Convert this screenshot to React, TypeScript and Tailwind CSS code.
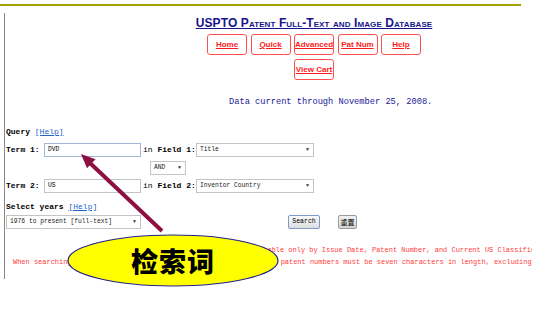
import React from "react";

const navBtns = ["Home", "Quick", "Advanced", "Pat Num", "Help"];

function NavButton({ label }: { label: string }) {
  return (
    <div className="w-[40px] h-[21px] border border-[#ff5050] rounded-[3px] flex items-center justify-center">
      <span className="text-[8px] font-bold text-[#ff1a1a] underline font-['Liberation_Sans',sans-serif] whitespace-nowrap">
        {label}
      </span>
    </div>
  );
}

function FakeSelect({ value, w }: { value: string; w: string }) {
  return (
    <div
      className={`${w} h-[14px] border border-[#c4c4c4] bg-white flex items-center justify-between pl-[3px] pr-[4px]`}
    >
      <span className="text-[6.3px] leading-none text-[#222] whitespace-nowrap">{value}</span>
      <span className="text-[5px] leading-none text-[#333]">▼</span>
    </div>
  );
}

export default function App() {
  return (
    <div className="relative w-[551px] h-[319px] bg-white overflow-hidden font-['Liberation_Mono',monospace]">
      {/* top rule */}
      <div className="mt-[4px] h-[2px] w-[521px] bg-[#a0a000]" />

      <div className="mt-[7px] ml-[4px] w-[528px] h-[266px] border-l border-[#8a8a8a] overflow-hidden">
        {/* header */}
        <div className="ml-[189px] w-[240px] flex flex-col items-center">
          <div className="mt-[3px] leading-[14px] text-[12px] font-bold text-[#14148c] underline [font-variant:small-caps] font-['Liberation_Sans',sans-serif] whitespace-nowrap tracking-[0.1px]">
            USPTO Patent Full-Text and Image Database
          </div>
          <div className="mt-[4px] flex gap-[3.5px]">
            {navBtns.map((b) => (
              <NavButton key={b} label={b} />
            ))}
          </div>
          <div className="mt-[4px]">
            <NavButton label="View Cart" />
          </div>
        </div>

        <div className="mt-[17px] ml-[224px] text-[8.7px] leading-[10px] text-[#1a1a99] whitespace-nowrap">
          Data current through November 25, 2008.
        </div>

        {/* form */}
        <div className="ml-[1px] mt-[20px] text-[8px] text-black">
          <div className="leading-[10px] font-bold">
            Query <span className="text-[#2266cc] underline font-normal">[Help]</span>
          </div>

          <div className="mt-[6px] flex items-center h-[14px]">
            <span className="font-bold w-[38px] whitespace-nowrap">Term 1:</span>
            <div className="w-[97px] h-[14px] border border-[#9fb8d8] pl-[3px] flex items-center">
              <span className="text-[6.3px] leading-none">DVD</span>
            </div>
            <span className="ml-[2px] w-[53px] whitespace-nowrap">
              in <b>Field 1:</b>
            </span>
            <FakeSelect value="Title" w="w-[118px]" />
          </div>

          <div className="mt-[4px] ml-[144px]">
            <FakeSelect value="AND" w="w-[36px]" />
          </div>

          <div className="mt-[4px] flex items-center h-[14px]">
            <span className="font-bold w-[38px] whitespace-nowrap">Term 2:</span>
            <div className="w-[97px] h-[14px] border border-[#c4c4c4] pl-[3px] flex items-center">
              <span className="text-[6.3px] leading-none">US</span>
            </div>
            <span className="ml-[2px] w-[53px] whitespace-nowrap">
              in <b>Field 2:</b>
            </span>
            <FakeSelect value="Inventor Country" w="w-[118px]" />
          </div>

          <div className="mt-[9px] leading-[10px] font-bold">
            Select years <span className="text-[#2266cc] underline font-normal">[Help]</span>
          </div>

          <div className="mt-[3px] flex items-center">
            <FakeSelect value="1976 to present [full-text]" w="w-[135px]" />
            <button className="ml-[147px] w-[32px] h-[14px] border border-[#7b9cc9] rounded-[2px] bg-gradient-to-b from-[#fafafa] to-[#dedede] text-[6.5px] leading-none text-black">
              Search
            </button>
            <button className="ml-[18px] w-[19px] h-[14px] border border-[#9a9a9a] rounded-[2px] bg-gradient-to-b from-[#f2f2f2] to-[#d4d4d4] text-[7px] leading-none text-black font-['Noto_Sans_CJK_SC',sans-serif]">
              重置
            </button>
          </div>
        </div>

        {/* notes */}
        <div className="mt-[15px] text-[6.97px] leading-[12px] text-[#ff3b3b] whitespace-nowrap">
          <div className="ml-[91px]">
            Patents from 1790 through 1975 are searchable only by Issue Date, Patent Number, and Current US Classification.
          </div>
          <div className="ml-[8px]">
            When searching for specific numbers in the Patent Number field, patent numbers must be seven characters in length, excluding commas, which are optional.
          </div>
        </div>
      </div>

      {/* annotation overlay */}
      <svg className="absolute left-0 top-0" width="551" height="319" viewBox="0 0 551 319">
        <line x1="162" y1="231" x2="90" y2="163" stroke="#8e1040" strokeWidth="4" />
        <polygon points="81,154 95.5,159.2 87,168.2" fill="#8e1040" />
        <ellipse cx="173" cy="260.5" rx="105" ry="25.5" fill="#ffff00" stroke="#22228a" strokeWidth="1.2" />
      </svg>
      <div className="absolute left-[68px] top-[235px] w-[210px] h-[51px] flex items-center justify-center">
        <span className="text-[27px] font-black text-black leading-none tracking-[1px] font-['Noto_Sans_CJK_SC',sans-serif]">
          检索词
        </span>
      </div>
    </div>
  );
}
